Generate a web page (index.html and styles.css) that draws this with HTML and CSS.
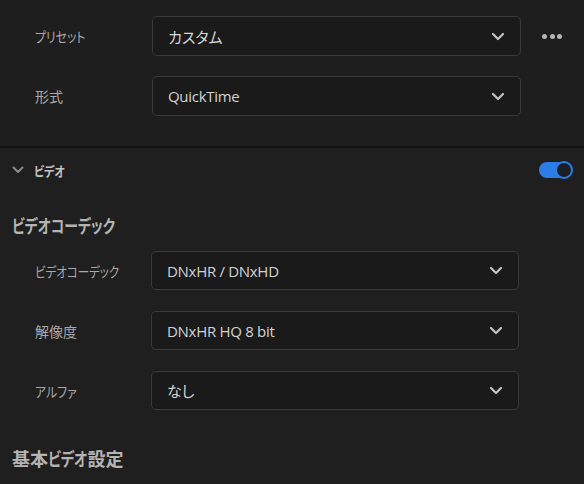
FILE: index.html
```html
<!DOCTYPE html>
<html lang="ja">
<head>
<meta charset="utf-8">
<link rel="stylesheet" href="styles.css">
</head>
<body>
<div class="panel">
  <section class="top">
    <div class="row">
      <span class="label"><span class="cond">プリセット</span></span>
      <div class="select wide"><span class="value">カスタム</span>
        <svg class="chev" width="14" height="9" viewBox="0 0 14 9"><path d="M2 2 L7 7 L12 2" fill="none" stroke="#c4c4c4" stroke-width="2.2" stroke-linecap="round" stroke-linejoin="round"/></svg>
      </div>
      <div class="more"><i></i><i></i><i></i></div>
    </div>
    <div class="row">
      <span class="label">形式</span>
      <div class="select wide"><span class="value latin">QuickTime</span>
        <svg class="chev" width="14" height="9" viewBox="0 0 14 9"><path d="M2 2 L7 7 L12 2" fill="none" stroke="#c4c4c4" stroke-width="2.2" stroke-linecap="round" stroke-linejoin="round"/></svg>
      </div>
    </div>
  </section>
  <section class="video">
    <div class="header">
      <svg class="hchev" width="12" height="8" viewBox="0 0 12 8"><path d="M1.5 1.5 L6 6 L10.5 1.5" fill="none" stroke="#8a8a8a" stroke-width="2" stroke-linecap="round" stroke-linejoin="round"/></svg>
      <span class="htitle"><span class="cond">ビデオ</span></span>
      <div class="toggle"><span class="knob"></span></div>
    </div>
    <h2 class="heading"><span class="cond strong">ビデオコーデック</span></h2>
    <div class="rows">
      <div class="row">
        <span class="label"><span class="cond narrow">ビデオコーデック</span></span>
        <div class="select"><span class="value latin">DNxHR / DNxHD</span>
          <svg class="chev" width="14" height="9" viewBox="0 0 14 9"><path d="M2 2 L7 7 L12 2" fill="none" stroke="#c4c4c4" stroke-width="2.2" stroke-linecap="round" stroke-linejoin="round"/></svg>
        </div>
      </div>
      <div class="row">
        <span class="label">解像度</span>
        <div class="select"><span class="value latin">DNxHR HQ 8 bit</span>
          <svg class="chev" width="14" height="9" viewBox="0 0 14 9"><path d="M2 2 L7 7 L12 2" fill="none" stroke="#c4c4c4" stroke-width="2.2" stroke-linecap="round" stroke-linejoin="round"/></svg>
        </div>
      </div>
      <div class="row">
        <span class="label"><span class="cond">アルファ</span></span>
        <div class="select"><span class="value">なし</span>
          <svg class="chev" width="14" height="9" viewBox="0 0 14 9"><path d="M2 2 L7 7 L12 2" fill="none" stroke="#c4c4c4" stroke-width="2.2" stroke-linecap="round" stroke-linejoin="round"/></svg>
        </div>
      </div>
    </div>
    <h2 class="heading second">基本<span class="cond mid">ビデオ</span>設定</h2>
  </section>
</div>
</body>
</html>
```
FILE: styles.css
```css
* { box-sizing: border-box; }
html, body {
  margin: 0;
  padding: 0;
  background: #1f1f1f;
  overflow: hidden;
}
body {
  width: 584px;
  height: 484px;
  font-family: "Noto Sans CJK JP", "Noto Sans", sans-serif;
  font-feature-settings: "palt";
  color: #c8c8c8;
}
.panel { display: flex; flex-direction: column; }
.top {
  display: flex;
  flex-direction: column;
  gap: 20px;
  padding: 16px 0 30px 0;
  background: #1e1e1e;
  border-bottom: 2px solid #121212;
}
.row {
  display: flex;
  align-items: center;
}
.label {
  width: 152px;
  padding-left: 35px;
  font-size: 14px;
  color: #a9a9a9;
  white-space: nowrap;
}
/* condensed kana, as in the UI font of the reference */
.cond {
  display: inline-block;
  transform: scaleX(0.85);
  transform-origin: 0 50%;
}
.cond.narrow { transform: scaleX(0.82); }
.cond.strong { transform: scaleX(0.77); }
.cond.mid { transform: scaleX(0.78); margin-right: -11px; }
.select {
  width: 368px;
  height: 39px;
  border: 1.5px solid #3a3a3a;
  border-radius: 5px;
  background: #1a1a1a;
  display: flex;
  align-items: center;
  justify-content: space-between;
  padding: 0 15px 0 15px;
}
.select.wide { width: 369px; height: 40px; }
.value {
  font-size: 15px;
  color: #d6d6d6;
}
.value.latin {
  font-family: "Open Sans", "Noto Sans", sans-serif;
  font-size: 15px;
  letter-spacing: -0.3px;
  color: #d2d2d2;
}
.chev { display: block; }
.more {
  margin-left: 21px;
  display: flex;
  gap: 2.5px;
}
.more i {
  display: block;
  width: 5px;
  height: 5px;
  border-radius: 50%;
  background: #b4b4b4;
}
.video {
  display: flex;
  flex-direction: column;
}
.header {
  height: 44px;
  display: flex;
  align-items: center;
  padding: 0 12px 0 12px;
}
.hchev { display: block; margin-right: 10px; }
.htitle {
  font-size: 13px;
  font-weight: 700;
  color: #c4c4c4;
  flex: 1;
}
.toggle {
  width: 33px;
  height: 16px;
  border-radius: 8px;
  background: #2c7de6;
  position: relative;
}
.knob {
  position: absolute;
  right: -1px;
  top: -1px;
  width: 18px;
  height: 18px;
  border-radius: 50%;
  background: #1b1e24;
  border: 2.5px solid #2c7de6;
}
.heading {
  margin: 0;
  padding: 20px 12px 0 12px;
  font-size: 18px;
  font-weight: 700;
  color: #b4b4b4;
  line-height: 26px;
  white-space: nowrap;
}
.rows {
  display: flex;
  flex-direction: column;
  gap: 21px;
  padding-top: 13px;
}
.rows .label { width: 151px; }
.heading.second { padding-top: 35px; }
```
